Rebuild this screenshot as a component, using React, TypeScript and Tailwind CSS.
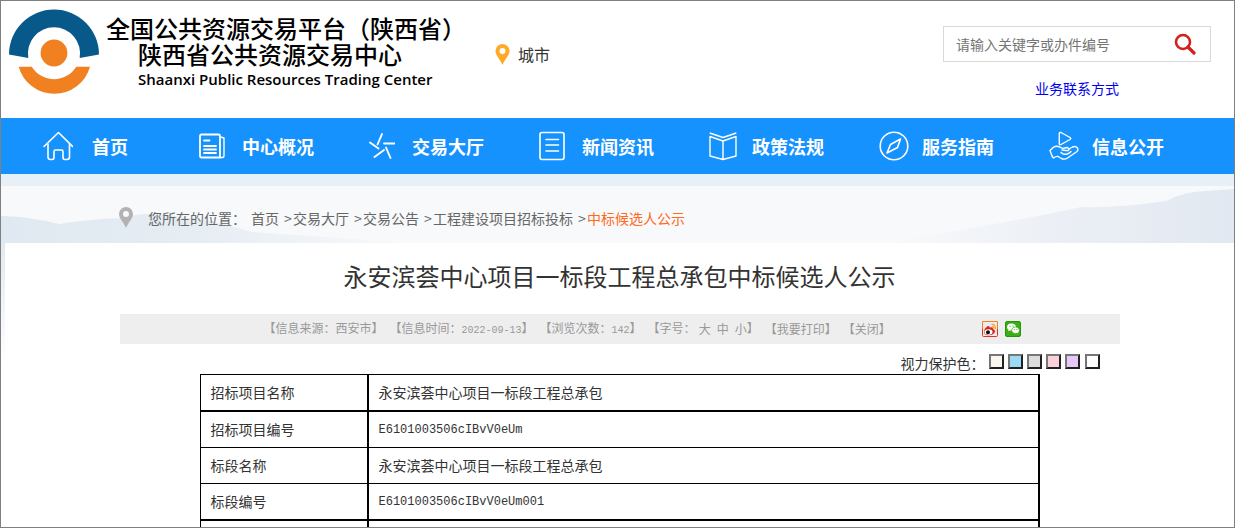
import React from "react";

type IconProps = { className?: string };

type NavItem = {
    label: string;
    icon: React.ReactNode;
    className: string;
};

const stroke = { fill: "none", stroke: "currentColor", strokeWidth: 1.6, strokeLinecap: "round", strokeLinejoin: "round" } as const;

const Logo = () => (
    <svg viewBox="0 0 92 88" className="w-[92px] h-[88px] shrink-0" aria-hidden="true">
        <path d="M1 46.500 A45 45 0 1 1 91 46.500 L71.700 50 A26.100 26.100 0 1 0 20.300 50 Z" fill="#07598a" />
        <path d="M10.700 58.700 H23.800 A26 26 0 0 0 68.200 58.700 H82 A37 37 0 0 1 10.700 58.700 Z" fill="#f08020" />
        <circle cx="46" cy="45" r="13.400" fill="#f08020" />
    </svg>
);

const PinIcon = ({ className }: IconProps) => (
    <svg viewBox="0 0 14 21" className={className} fill="currentColor" aria-hidden="true">
        <path fillRule="evenodd" d="M7 0 A7 7 0 0 0 0 7 C0 11.5 4.5 15 7 21 C9.500 15 14 11.500 14 7 A7 7 0 0 0 7 0 Z M7 4 A3 3 0 1 1 7 10 A3 3 0 1 1 7 4 Z" />
    </svg>
);

const SearchIcon = () => (
    <svg viewBox="0 0 22 22" className="w-[22px] h-[22px]" fill="none" stroke="#d3211f" aria-hidden="true">
        <circle cx="9" cy="9" r="7" strokeWidth="2.600" />
        <path d="M14 14 L20 20" strokeWidth="3.200" strokeLinecap="round" />
    </svg>
);

const HomeIcon = () => (
    <svg viewBox="0 0 30 30" className="w-[30px] h-[30px]" {...stroke} aria-hidden="true">
        <path d="M1 15.500 L15.500 1.500 L29.500 15.500" />
        <path d="M5 13 V26 Q5 28.500 7.500 28.500 H9 Q11 28.500 11 26.500 V20.500 Q11 19 12.500 19 H18.500 Q20 19 20 20.500 V26.500 Q20 28.500 22 28.500 H24 Q26.500 28.500 26.500 26 V13" />
    </svg>
);

const PaperIcon = () => (
    <svg viewBox="0 0 26 30" className="w-[26px] h-[30px]" {...stroke} aria-hidden="true">
        <path d="M2.500 3.500 H19.500 Q21 3.500 21 5 V26.500 H2.500 Q1 26.500 1 25 V5 Q1 3.500 2.500 3.500 Z" strokeWidth="1.800" />
        <path d="M21.500 6 L25 7 V25 Q25 26.500 23.500 26.500 H21" strokeWidth="1.400" />
        <path d="M5 9.500 H10.500 M5 15 H17 M5 18.500 H17 M5 22 H17" strokeWidth="1.800" />
    </svg>
);

const TradeIcon = () => (
    <svg viewBox="0 0 26 30" className="w-[26px] h-[30px]" {...stroke} strokeWidth={1.900} aria-hidden="true">
        <path d="M13 3 L8.500 13.500 M1 11.500 L9.500 17.500 M15 12.500 H25.500 M5.500 26 L15 19 M17 16.500 L21.500 27" />
    </svg>
);

const NewsIcon = () => (
    <svg viewBox="0 0 26 30" className="w-[26px] h-[30px]" {...stroke} aria-hidden="true">
        <rect x="1" y="1.500" width="24" height="27" rx="2" />
        <path d="M7 8.500 H19.500 M7 14 H19.500 M7 20 H19.500" />
    </svg>
);

const BookIcon = () => (
    <svg viewBox="0 0 28 30" className="w-[28px] h-[30px]" {...stroke} strokeWidth={1.400} strokeLinecap="butt" aria-hidden="true">
        <path d="M.7 2 L14 6.500 L27.300 2" />
        <path d="M14 10 L1 5.500 V25 L14 28.500 L27 25 V5.500 Z V28.500" />
    </svg>
);

const CompassIcon = () => (
    <svg viewBox="0 0 30 30" className="w-[30px] h-[30px]" {...stroke} aria-hidden="true">
        <circle cx="15" cy="15" r="13.800" />
        <path d="M21.500 8 L18.500 16.500 L8 22 L11.500 13.500 Z" />
    </svg>
);

const HandIcon = () => (
    <svg viewBox="0 0 30 30" className="w-[30px] h-[30px]" {...stroke} strokeWidth={1.400} aria-hidden="true">
        <path d="M12 1.500 Q10.300 1 10.300 3 V12.500 Q10.300 14.500 12 13.500 L21 8.500 Q22.500 7.500 21 6.500 Z" />
        <path d="M1 19.500 L4.500 16.200 Q7.500 14.500 10.500 15.800 L13.500 17.500 L18 16.500 Q19.500 16.800 20 18 L23.500 16 Q26.500 14.800 28.500 17 Q29.500 19 28 20.500 L18.500 27 Q15.500 29 12.500 27.500 L9 25.500 Q7.500 25 4.500 27 Q3 26 2.500 23.500 Z" />
        <path d="M20 18 Q20 20 17 19.500 L13 19 M12 21.500 Q14 23.800 17.500 23.200 Q20.500 22.500 22 20.500" />
    </svg>
);

const WeiboIcon = () => (
    <svg viewBox="0 0 16 16" className="w-4 h-4" aria-hidden="true">
        <rect x=".5" y=".5" width="15" height="15" rx="1" fill="#ececec" stroke="#e0301e" />
        <path d="M.5 8 V1.500 Q.5 .5 1.500 .5 H14.500 Q15.500 .5 15.500 1.500 V8" fill="none" stroke="#f58220" />
        <path d="M2 11 Q2 7 6 5 Q8 4.500 7.500 6.500 Q11.500 5.500 11 8 Q14 9 12.500 12 Q10.500 14.500 6 14.300 Q2 14 2 11 Z" fill="#dd2420" />
        <ellipse cx="6.500" cy="11" rx="4" ry="2.800" fill="#fff" />
        <circle cx="6" cy="11.200" r="2" fill="#111" />
        <path d="M9.500 3.500 Q13.500 3 13.500 8 M10 5.500 Q12 5.500 11.700 7.500" fill="none" stroke="#f6a01a" strokeWidth="1.200" />
    </svg>
);

const WechatIcon = () => (
    <svg viewBox="0 0 16 16" className="w-4 h-4" aria-hidden="true">
        <rect x=".5" y=".5" width="15" height="15" rx="1.500" fill="#3aae12" stroke="#23960c" />
        <path d="M6.500 2.500 C3.500 2.500 2 4.300 2 6 C2 7.300 2.700 8.200 3.500 8.800 L3.200 10.300 L5 9.500 H7 C10 9.300 11 7.500 11 6 C11 4 9 2.500 6.500 2.500 Z" fill="#fff" />
        <path d="M10.500 6 C8 6 6.700 7.700 6.700 9.300 C6.700 11 8.200 12.500 10.500 12.500 L12 12.300 L13.500 13.200 L13.200 11.700 C14 11 14.400 10.200 14.400 9.300 C14.400 7.500 12.700 6 10.500 6 Z" fill="#fff" stroke="#3aae12" strokeWidth=".7" />
        <path d="M4.500 5.200 H5.500 M7.500 5.200 H8.500 M8.800 8.500 H9.600 M11.500 8.500 H12.300" stroke="#2a9a10" />
    </svg>
);

const navItems: NavItem[] = [
    { label: "首页", icon: <HomeIcon />, className: "w-9 mr-[13px]" },
    { label: "中心概况", icon: <PaperIcon />, className: "w-[30px] mr-[13px]" },
    { label: "交易大厅", icon: <TradeIcon />, className: "w-[30px] mr-[13px]" },
    { label: "新闻资讯", icon: <NewsIcon />, className: "w-[30px] mr-[13px]" },
    { label: "政策法规", icon: <BookIcon />, className: "w-[30px] mr-[13px]" },
    { label: "服务指南", icon: <CompassIcon />, className: "w-[30px] mr-[13px]" },
    { label: "信息公开", icon: <HandIcon />, className: "w-[30px] mr-[13px]" },
];

const crumbs = ["首页", "交易大厅", "交易公告", "工程建设项目招标投标"];

const swatches = [
    { name: "米色", className: "bg-[#faf6f0]" },
    { name: "蓝色", className: "bg-[#9cdaf5]" },
    { name: "灰色", className: "bg-[#dcdcdc]" },
    { name: "粉色", className: "bg-[#fbd1d9]" },
    { name: "紫色", className: "bg-[#e3c8f8]" },
    { name: "白色", className: "bg-white ml-px" },
];

const rows = [
    { label: "招标项目名称", value: "永安滨荟中心项目一标段工程总承包", code: false, border: "h-[37px] border-b-2" },
    { label: "招标项目编号", value: "E6101003506cIBvV0eUm", code: true, border: "h-9 border-b" },
    { label: "标段名称", value: "永安滨荟中心项目一标段工程总承包", code: false, border: "h-9 border-b" },
    { label: "标段编号", value: "E6101003506cIBvV0eUm001", code: true, border: "h-[37px] border-b-2" },
    { label: "", value: "", code: false, border: "h-9 border-b" },
];

const Header = () => (
    <header className="flex h-[117px] pl-[7px] pr-[23px]">
        <a href="#" className="flex text-black">
            <span className="pt-[7px]">
                <Logo />
            </span>
            <span className="flex flex-col items-start w-[375px] pt-3.5 pl-1.5 font-medium whitespace-nowrap">
                <span className="text-2xl leading-[26px]">全国公共资源交易平台（陕西省）</span>
                <span className="pl-8 text-2xl leading-[26px]">陕西省公共资源交易中心</span>
                <span className="pl-8 text-[15px] leading-6 font-['Open_Sans','Noto_Sans_CJK_SC',sans-serif] font-semibold">Shaanxi Public Resources Trading Center</span>
            </span>
        </a>
        <a href="#" className="flex items-center h-6 mt-[41px] ml-5 text-base text-[#333]">
            <PinIcon className="w-[15px] h-[21px] mr-2 text-[#ffa928]" />
            城市
        </a>
        <div className="flex flex-col items-center w-[268px] ml-auto pt-[25px]">
            <form className="flex items-center w-full h-9 pl-3 pr-3.5 border border-[#d9d9d9]">
                <input type="text" aria-label="搜索" placeholder="请输入关键字或办件编号" className="flex-1 min-w-0 text-sm outline-none placeholder:text-[#757575]" />
                <button type="button" aria-label="搜索">
                    <SearchIcon />
                </button>
            </form>
            <a href="#" className="mt-4 text-sm text-[#0000ee]">业务联系方式</a>
        </div>
    </header>
);

const Nav = () => (
    <nav className="flex items-center h-14 pl-[42px] bg-[#1692ff] text-white text-lg font-bold whitespace-nowrap">
        {navItems.map(({ label, icon, className }) => (
            <a key={label} href="#" className="flex items-center mr-[55px] first:mr-[71px]">
                <span className={className}>{icon}</span>
                {label}
            </a>
        ))}
    </nav>
);

const Mountains = () => (
    <svg viewBox="0 0 1233 57" preserveAspectRatio="none" className="absolute inset-0 w-full h-full" aria-hidden="true">
        <defs>
            <linearGradient id="left" x1="0" x2="1" y1="0" y2="0">
                <stop offset="0" stopColor="#e0e9f1" />
                <stop offset=".5" stopColor="#e6edf3" />
                <stop offset="1" stopColor="#f7f9fb" />
            </linearGradient>
            <linearGradient id="right" x1="0" x2="1" y1="0" y2="0">
                <stop offset="0" stopColor="#f8f9fb" />
                <stop offset=".5" stopColor="#ebeff5" />
                <stop offset="1" stopColor="#e2e8f1" />
            </linearGradient>
        </defs>
        <path d="M0 30 Q25 30 58 38 Q90 33 120 32 Q150 24 180 31 Q215 34 250 46 L340 52 L400 57 H0 Z" fill="url(#left)" />
        <path d="M890 57 L970 42 Q1040 30 1080 21 Q1120 22 1165 15 Q1185 5 1205 5 L1233 3 V57 Z" fill="url(#right)" />
    </svg>
);

const Breadcrumb = () => (
    <div className="relative h-[57px] bg-[#f8f9fb]">
        <Mountains />
        <div className="relative flex items-center h-full pt-1.5 pl-[118px] text-sm text-[#666] whitespace-nowrap">
            <PinIcon className="w-3.5 h-[21px] mr-[15px] text-[#b2b2b2]" />
            <span className="mr-[5px]">您所在的位置：</span>
            {crumbs.map((crumb) => (
                <React.Fragment key={crumb}>
                    <a href="#">{crumb}</a>
                    <span className="w-3.5 pl-[5px]">&gt;</span>
                </React.Fragment>
            ))}
            <a href="#" className="text-[#ff6a1c]">中标候选人公示</a>
        </div>
    </div>
);

const InfoBar = () => (
    <div className="flex items-center w-full max-w-[1000px] h-[30px] mx-auto mt-5 pl-36 bg-[#eee] text-xs text-[#999] whitespace-nowrap">
        <div className="flex gap-1.5 w-[718px]">
            <span>【信息来源：西安市】</span>
            <span>【信息时间：<span className="font-['Liberation_Mono',monospace] text-[10px]">2022-09-13</span>】</span>
            <span>【浏览次数：<span className="font-['Liberation_Mono',monospace] text-[10px]">142</span>】</span>
            <span className="flex">
                【字号：
                <button type="button" className="mx-[3px]">大</button>
                <button type="button" className="mx-[3px]">中</button>
                <button type="button" className="ml-[3px]">小</button>】
            </span>
            <button type="button">【我要打印】</button>
            <button type="button">【关闭】</button>
        </div>
        <a href="#" aria-label="微博" className="mr-[7px]"><WeiboIcon /></a>
        <a href="#" aria-label="微信"><WechatIcon /></a>
    </div>
);

const ColorPicker = () => (
    <div className="flex items-center justify-end w-full max-w-[1000px] h-[30px] mx-auto pt-2 pr-5 text-sm text-[#333]">
        <span className="mr-1">视力保护色：</span>
        <div className="flex gap-1 pb-1">
            {swatches.map(({ name, className }) => (
                <button key={name} type="button" aria-label={name} className={`w-[15px] h-[15px] border-2 border-t-[#767676] border-l-[#767676] border-r-[#212121] border-b-[#212121] ${className}`} />
            ))}
        </div>
    </div>
);

const DetailTable = () => (
    <table className="w-full max-w-[840px] mx-auto border-separate border-spacing-0 border-t border-l border-black text-sm text-[#333]">
        <tbody>
            {rows.map(({ label, value, code, border }, index) => (
                <tr key={index}>
                    <th scope="row" className={`w-[168px] pt-0 pb-0.5 pl-2.5 border-r-2 border-black text-left font-normal ${border}`}>{label}</th>
                    <td className={`pt-0 pl-2.5 border-r-2 border-black ${border} ${code ? "pb-0 font-['Liberation_Mono',monospace] text-xs" : "pb-0.5"}`}>{value}</td>
                </tr>
            ))}
        </tbody>
    </table>
);

export default function App() {
    return (
        <div className="h-screen overflow-hidden border border-[#808080] bg-white font-['Noto_Sans_CJK_SC',sans-serif]">
            <Header />
            <Nav />
            <div className="h-3 bg-[#e8f0f7]" />
            <Breadcrumb />
            <div className="pl-1 bg-linear-to-b from-[#e2e9f3] to-white to-40%">
                <main className="pt-[15px] bg-white">
                    <h1 className="text-2xl leading-9 text-center text-[#333]">永安滨荟中心项目一标段工程总承包中标候选人公示</h1>
                    <InfoBar />
                    <ColorPicker />
                    <DetailTable />
                </main>
            </div>
        </div>
    );
}
